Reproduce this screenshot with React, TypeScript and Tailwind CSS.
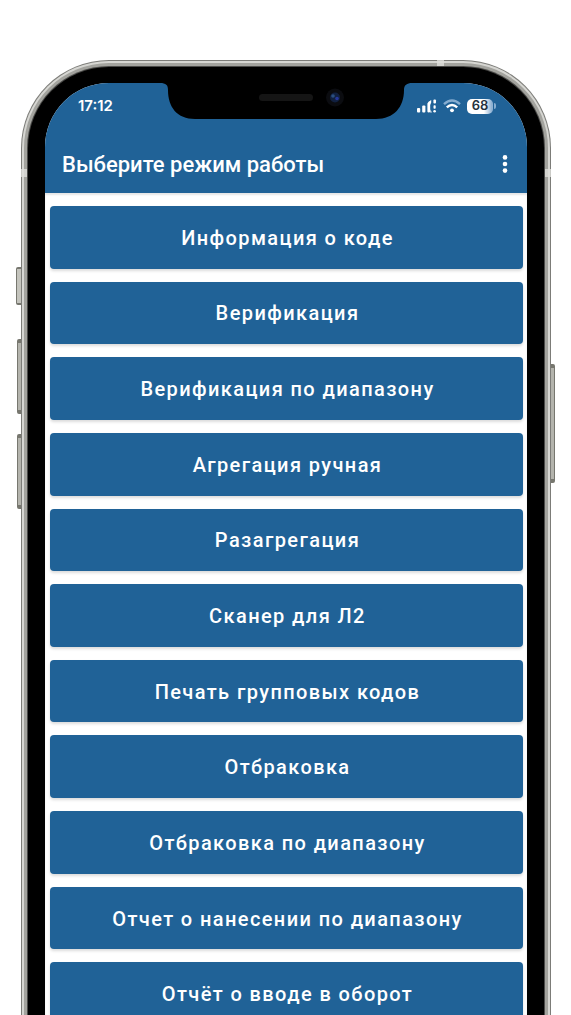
import React from "react";

const modes = [
  "Информация о коде",
  "Верификация",
  "Верификация по диапазону",
  "Агрегация ручная",
  "Разагрегация",
  "Сканер для Л2",
  "Печать групповых кодов",
  "Отбраковка",
  "Отбраковка по диапазону",
  "Отчет о нанесении по диапазону",
  "Отчёт о вводе в оборот",
];

function SignalIcon() {
  return (
    <svg width="20" height="14" viewBox="0 0 20 14" fill="#fff" aria-hidden="true">
      <rect x="0" y="9" width="3.2" height="4.5" rx="1" />
      <rect x="5.2" y="6.5" width="3.2" height="7" rx="1" />
      <path d="M10.4 4.4 Q10.8 3 14.2 1 V3.5 L13.2 6 V12.4 Q13.2 13.5 11.8 13.5 Q10.4 13.5 10.4 12.4Z" />
      <path d="M13.6 10.5 L14.8 13.5 H13.2Z" />
      <rect x="16.4" y="0.5" width="2.6" height="4" rx="1" />
      <rect x="16.5" y="6.2" width="2.2" height="3.6" rx="0.8" />
      <circle cx="17.6" cy="12.2" r="1.3" />
    </svg>
  );
}

function WifiIcon() {
  return (
    <svg width="18" height="14" viewBox="0 0 18 14" fill="none" aria-hidden="true">
      <path d="M1 5.2 Q9 -2.2 17 5.2" stroke="#86add0" strokeWidth="2.4" />
      <path d="M3.8 8.4 Q9 3.4 14.2 8.4" stroke="#fff" strokeWidth="2.4" />
      <circle cx="9" cy="11.3" r="1.9" fill="#fff" />
    </svg>
  );
}

function Battery() {
  return (
    <div className="flex items-center gap-px">
      <div className="flex h-[15px] w-[26px] items-center justify-center rounded-[5px] bg-linear-to-r from-white from-65% to-[#8fb2d3] to-95% font-[Inter,sans-serif] text-[13px] font-semibold text-[#26323d]">
        68
      </div>
      <div className="h-[6px] w-[2px] rounded-r-full bg-[#86add0]" />
    </div>
  );
}

function Notch() {
  return (
    <svg
      className="absolute -top-px left-1/2 -translate-x-1/2"
      width="252"
      height="38"
      viewBox="0 0 252 38"
      aria-hidden="true"
    >
      <path
        d="M0 0 H252 V1 C247 1 244 3 244 8 C244 25 234 37 216 37 H35 C17 37 8 25 8 8 C8 3 6 1 0 1Z"
        fill="#000"
      />
      <rect x="99" y="12" width="54" height="7" rx="3.5" fill="#151515" />
      <circle cx="175" cy="15.5" r="9" fill="#0b0c10" />
      <circle cx="175" cy="15.5" r="5" fill="#11203f" />
      <circle cx="173" cy="14" r="1.8" fill="#2a4f80" />
      <circle cx="177" cy="16.5" r="1.8" fill="#24369a" />
    </svg>
  );
}

function StatusBar() {
  return (
    <div className="flex h-[46px] items-center justify-between pr-[31px] pl-[33px] text-white">
      <span className="font-[Inter,sans-serif] text-[15px] font-semibold">17:12</span>
      <div className="flex items-center gap-[6px]">
        <SignalIcon />
        <WifiIcon />
        <Battery />
      </div>
    </div>
  );
}

function Header() {
  return (
    <header className="flex h-[64px] items-center justify-between pt-[6px] pr-3 pl-[17px] text-white">
      <h1 className="text-[22px] font-medium">Выберите режим работы</h1>
      <button type="button" aria-label="Меню" className="flex h-6 w-5 items-center justify-center">
        <svg width="6" height="18" viewBox="0 0 6 18" fill="currentColor" aria-hidden="true">
          <circle cx="3" cy="2.4" r="2.3" />
          <circle cx="3" cy="9" r="2.3" />
          <circle cx="3" cy="15.6" r="2.3" />
        </svg>
      </button>
    </header>
  );
}

export default function App() {
  return (
    <div className="h-screen overflow-hidden bg-white pt-[60px] pr-[20px] pl-[21px] font-[Roboto,sans-serif]">
      <div className="relative">
        {/* Side keys */}
        <div className="absolute top-[207px] -left-[5px] h-[38px] w-[6px] rounded-l-xs border border-y-2 border-[#77776f] bg-[#c4c4bd]" />
        <div className="absolute top-[279px] -left-[4px] h-[75px] w-[5px] rounded-l-xs border border-y-4 border-[#77776f] bg-[#b4b4ad]" />
        <div className="absolute top-[374px] -left-[4px] h-[75px] w-[5px] rounded-l-xs border border-y-4 border-[#77776f] bg-[#b4b4ad]" />
        <div className="absolute top-[304px] -right-[4px] h-[119px] w-[5px] rounded-r-xs border border-y-4 border-[#77776f] bg-[#b4b4ad]" />

        {/* Metal frame */}
        <div className="relative rounded-t-[88px] bg-[#7c7c78] px-px pt-px">
          <div className="rounded-t-[87px] bg-[#d6d6d2] px-[2px] pt-[2px]">
            <div className="rounded-t-[85px] bg-[#a3a39e] px-[3px] pt-[3px]">
              <div className="rounded-t-[82px] bg-[#4a4a48] px-px pt-px">
                <div className="rounded-t-[81px] bg-black px-[17px] pt-[16px]">
                  {/* Screen */}
                  <div className="relative overflow-hidden rounded-t-[64px] bg-white">
                    <div className="bg-[#206297]">
                      <Notch />
                      <StatusBar />
                      <Header />
                    </div>
                    <main className="grid min-h-[844px] auto-rows-fr gap-[13px] pt-[13px] pr-1 pb-3 pl-[5px] shadow-[inset_0_2px_2px_#0000001a]">
                      {modes.map((mode) => (
                        <button
                          key={mode}
                          type="button"
                          className="rounded-[4px] bg-[#206297] pt-px pl-[2px] text-xl font-medium tracking-[0.07em] text-white shadow-[0_2px_3px_#00000024]"
                        >
                          {mode}
                        </button>
                      ))}
                    </main>
                  </div>
                </div>
              </div>
            </div>
          </div>
        </div>

        {/* Antenna bands */}
        <div className="absolute top-[109px] left-0 h-[8px] w-[6px] bg-[#dededb]/80" />
        <div className="absolute top-[109px] right-0 h-[8px] w-[6px] bg-[#dededb]/80" />
        <div className="absolute top-0 right-[107px] h-[6px] w-[7px] bg-[#dededb]/80" />
      </div>
    </div>
  );
}
